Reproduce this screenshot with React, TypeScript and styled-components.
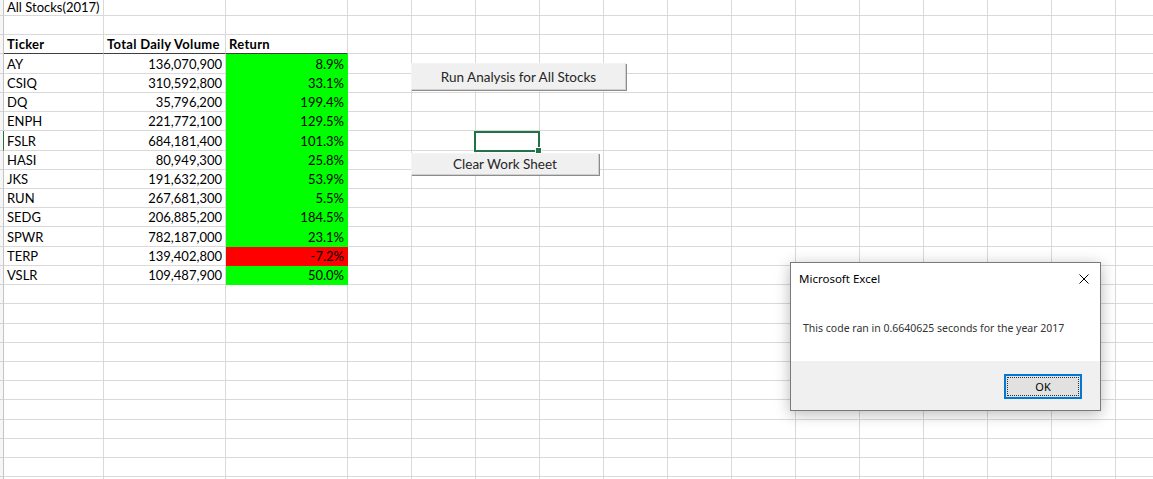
import styled, { createGlobalStyle } from "styled-components";

const GlobalStyle = createGlobalStyle`
  html, body {
    margin: 0;
    padding: 0;
    background: #ffffff;
    overflow: hidden;
  }
  body {
    font-family: Lato, "Liberation Sans", sans-serif;
  }
`

interface Stock {
  ticker: string;
  volume: string;
  ret: string;
}

const stocks: Stock[] = [
  { ticker: "AY", volume: "136,070,900", ret: "8.9%" },
  { ticker: "CSIQ", volume: "310,592,800", ret: "33.1%" },
  { ticker: "DQ", volume: "35,796,200", ret: "199.4%" },
  { ticker: "ENPH", volume: "221,772,100", ret: "129.5%" },
  { ticker: "FSLR", volume: "684,181,400", ret: "101.3%" },
  { ticker: "HASI", volume: "80,949,300", ret: "25.8%" },
  { ticker: "JKS", volume: "191,632,200", ret: "53.9%" },
  { ticker: "RUN", volume: "267,681,300", ret: "5.5%" },
  { ticker: "SEDG", volume: "206,885,200", ret: "184.5%" },
  { ticker: "SPWR", volume: "782,187,000", ret: "23.1%" },
  { ticker: "TERP", volume: "139,402,800", ret: "-7.2%" },
  { ticker: "VSLR", volume: "109,487,900", ret: "50.0%" },
];

const ROW_COUNT = 26;
const COL_COUNT = 16;
const ACTIVE_ROW = 7;

interface CellData {
  text?: string;
  align?: "left" | "right";
  bold?: boolean;
  fill?: string;
  underline?: boolean;
}

function cellAt(row: number, col: number): CellData {
  if (row === 0 && col === 0) return { text: "All Stocks(2017)" };
  if (row === 2) {
    const heads = ["Ticker", "Total Daily Volume", "Return"];
    if (col < 3) return { text: heads[col], bold: true, underline: true };
  }
  const idx = row - 3;
  if (idx >= 0 && idx < stocks.length) {
    const s = stocks[idx];
    if (col === 0) return { text: s.ticker };
    if (col === 1) return { text: s.volume, align: "right" };
    if (col === 2) {
      const neg = s.ret.startsWith("-");
      return { text: s.ret, align: "right", fill: neg ? "#ff0000" : "#00ff00" };
    }
  }
  return {};
}

function App() {
  const cells = [];
  for (let r = 0; r < ROW_COUNT; r++) {
    cells.push(<RowHead key={`h${r}`} $active={r === ACTIVE_ROW} />);
    for (let c = 0; c < COL_COUNT; c++) {
      const d = cellAt(r, c);
      cells.push(
        <Cell
          key={`${r}-${c}`}
          $align={d.align ?? "left"}
          $bold={!!d.bold}
          $fill={d.fill}
          $underline={!!d.underline}
          $top={r === 0}
        >
          {d.text}
        </Cell>
      );
    }
  }

  return (
    <>
      <GlobalStyle />
      <Sheet>
        <Grid>{cells}</Grid>

        <SheetButton $left={411} $top={63} $width={215} $height={27}>
          Run Analysis for All Stocks
        </SheetButton>
        <SheetButton $left={411} $top={153} $width={188} $height={22}>
          Clear Work Sheet
        </SheetButton>

        <Selection>
          <FillHandle />
        </Selection>

        <Dialog>
          <TitleBar>
            <Title>Microsoft Excel</Title>
            <CloseIcon width="10" height="10" viewBox="0 0 10 10">
              <path d="M0.5 0.5 L9.5 9.5 M9.5 0.5 L0.5 9.5" stroke="#000" strokeWidth="1" />
            </CloseIcon>
          </TitleBar>
          <Body>This code ran in 0.6640625 seconds for the year 2017</Body>
          <Footer>
            <OkButton>OK</OkButton>
          </Footer>
        </Dialog>
      </Sheet>
    </>
  );
}

const Sheet = styled.div`
  position: relative;
  width: 1153px;
  height: 479px;
  overflow: hidden;
  background: #ffffff;
`

const Grid = styled.div`
  display: grid;
  grid-template-columns: 4px 100px 122px 122px repeat(13, 64px);
  grid-template-rows: 16px repeat(25, 19.22px);
`

const RowHead = styled.div<{ $active: boolean }>`
  box-sizing: border-box;
  background: #f6f6f6;
  border-right: 1px solid ${(p) => (p.$active ? "#217346" : "#c4c4c4")};
  border-bottom: 1px solid #d4d4d4;
`

const Cell = styled.div<{
  $align: "left" | "right";
  $bold: boolean;
  $fill?: string;
  $underline: boolean;
  $top: boolean;
}>`
  box-sizing: border-box;
  display: flex;
  align-items: flex-end;
  justify-content: ${(p) => (p.$align === "right" ? "flex-end" : "flex-start")};
  padding: 0 3px ${(p) => (p.$top ? 1 : 2)}px 3px;
  background: ${(p) => p.$fill ?? "transparent"};
  border-right: 1px solid ${(p) => p.$fill ?? "#d9d9d9"};
  border-bottom: 1px solid
    ${(p) => (p.$underline ? "#3f3f3f" : p.$fill ?? "#d9d9d9")};
  font-family: Lato, "Liberation Sans", sans-serif;
  font-size: 13px;
  line-height: 13px;
  font-weight: ${(p) => (p.$bold ? 700 : 400)};
  letter-spacing: ${(p) => (p.$bold ? "0.3px" : "0")};
  color: #000000;
  white-space: nowrap;
  overflow: visible;
`

const SheetButton = styled.div<{ $left: number; $top: number; $width: number; $height: number }>`
  position: absolute;
  left: ${(p) => p.$left}px;
  top: ${(p) => p.$top}px;
  width: ${(p) => p.$width}px;
  height: ${(p) => p.$height}px;
  box-sizing: border-box;
  display: flex;
  align-items: center;
  justify-content: center;
  background: #f0f0f0;
  border-top: 1px solid #f4f4f4;
  border-left: 1px solid #f4f4f4;
  border-right: 1px solid #d0d0d0;
  border-bottom: 1px solid #d0d0d0;
  box-shadow: 1px 1px 0 #8c8c8c;
  font-family: Lato, "Liberation Sans", sans-serif;
  font-size: 13.5px;
  color: #262626;
`

const Selection = styled.div`
  position: absolute;
  left: 474px;
  top: 131px;
  width: 66px;
  height: 21px;
  box-sizing: border-box;
  border: 2px solid #217346;
`

const FillHandle = styled.div`
  position: absolute;
  right: -4px;
  bottom: -4px;
  width: 5px;
  height: 5px;
  background: #217346;
  border: 1px solid #ffffff;
  box-sizing: content-box;
`

const Dialog = styled.div`
  position: absolute;
  left: 790px;
  top: 262px;
  width: 311px;
  height: 149px;
  box-sizing: border-box;
  display: flex;
  flex-direction: column;
  background: #ffffff;
  border: 1px solid #7a7a7a;
  box-shadow: 0 3px 14px rgba(0, 0, 0, 0.28);
  font-family: "Noto Sans", "Open Sans", sans-serif;
`

const TitleBar = styled.div`
  height: 31px;
  display: flex;
  align-items: center;
  justify-content: space-between;
  padding: 0 11px 0 8px;
`

const Title = styled.span`
  font-size: 11.5px;
  color: #000000;
`

const CloseIcon = styled.svg`
  display: block;
`

const Body = styled.div`
  height: 67px;
  display: flex;
  align-items: center;
  padding-left: 12px;
  font-size: 10.5px;
  color: #333333;
  white-space: nowrap;
`

const Footer = styled.div`
  flex: 1;
  display: flex;
  align-items: flex-start;
  justify-content: flex-end;
  padding: 13px 18px 0 0;
  background: #f0f0f0;
`

const OkButton = styled.div`
  width: 78px;
  height: 25px;
  box-sizing: border-box;
  display: flex;
  align-items: center;
  justify-content: center;
  background: #e1e1e1;
  border: 1px solid #0078d7;
  box-shadow: inset 0 0 0 1px #0078d7, inset 0 0 0 2px #e1e1e1;
  outline: 1px dotted #333333;
  outline-offset: -4px;
  font-size: 11px;
  color: #000000;
`

export default App;
